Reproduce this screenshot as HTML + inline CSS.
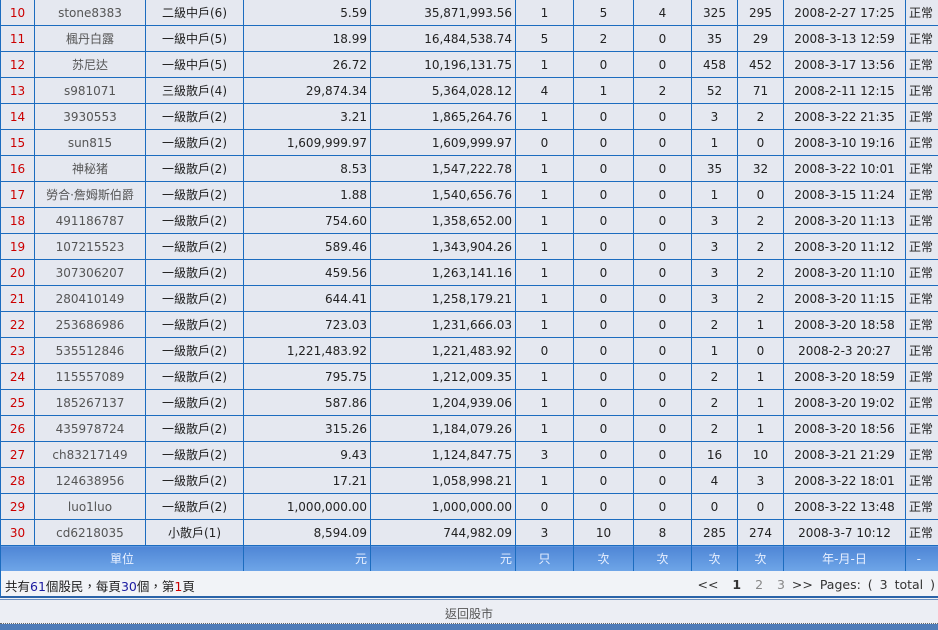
<!DOCTYPE html>
<html><head><meta charset="utf-8"><style>
*{margin:0;padding:0;box-sizing:border-box}
body{width:938px;height:630px;overflow:hidden;background:#eef0f5;font-family:"DejaVu Sans","Noto Sans CJK TC",sans-serif;font-size:12px;color:#222;position:relative}
table{position:absolute;left:0;top:-1px;border-collapse:collapse;table-layout:fixed;width:960px}
td{height:26px;border:1px solid #1c6cbf;background:#e5e8f0;text-align:center;white-space:nowrap;overflow:hidden;padding:0 3px}
td.r{text-align:right}
td.l{text-align:left;padding-left:3px}
td.n{color:#c00}
td.g{color:#555}
tr.h td{background:linear-gradient(#4f86d6,#6fa6e8);color:#e8f0ff;height:26px}
#info{position:absolute;left:0;top:571px;width:938px;height:26px;background:#f1f3f7;border-left:1px solid #1c6cbf;font-size:12.5px}
#info .a{position:absolute;left:4px;top:5px}
#info .b{position:absolute;right:3px;top:6px;color:#333;word-spacing:3px}
.bl{color:#1a1aa0}.rd{color:#c00}
#line{position:absolute;left:0;top:596px;width:938px;height:4px;border-top:2px solid #2a63a8;border-bottom:1px solid #6f92c0}
#back{position:absolute;left:0;top:600px;width:938px;height:24px;background:#eceef4;border-bottom:1px dotted #666;text-align:center;padding-top:5px;color:#555}
#bar{position:absolute;left:0;top:624px;width:938px;height:6px;background:#4f7cb8}
</style></head><body>
<table>
<colgroup><col style="width:34px"><col style="width:111px"><col style="width:98px"><col style="width:127px"><col style="width:145px"><col style="width:58px"><col style="width:60px"><col style="width:58px"><col style="width:46px"><col style="width:46px"><col style="width:122px"><col style="width:55px"></colgroup>
<tr><td class="n">10</td><td class="g">stone8383</td><td>二級中戶(6)</td><td class="r">5.59</td><td class="r">35,871,993.56</td><td>1</td><td>5</td><td>4</td><td>325</td><td>295</td><td>2008-2-27 17:25</td><td class="l">正常</td></tr>
<tr><td class="n">11</td><td class="g">楓丹白露</td><td>一級中戶(5)</td><td class="r">18.99</td><td class="r">16,484,538.74</td><td>5</td><td>2</td><td>0</td><td>35</td><td>29</td><td>2008-3-13 12:59</td><td class="l">正常</td></tr>
<tr><td class="n">12</td><td class="g">苏尼达</td><td>一級中戶(5)</td><td class="r">26.72</td><td class="r">10,196,131.75</td><td>1</td><td>0</td><td>0</td><td>458</td><td>452</td><td>2008-3-17 13:56</td><td class="l">正常</td></tr>
<tr><td class="n">13</td><td class="g">s981071</td><td>三級散戶(4)</td><td class="r">29,874.34</td><td class="r">5,364,028.12</td><td>4</td><td>1</td><td>2</td><td>52</td><td>71</td><td>2008-2-11 12:15</td><td class="l">正常</td></tr>
<tr><td class="n">14</td><td class="g">3930553</td><td>一級散戶(2)</td><td class="r">3.21</td><td class="r">1,865,264.76</td><td>1</td><td>0</td><td>0</td><td>3</td><td>2</td><td>2008-3-22 21:35</td><td class="l">正常</td></tr>
<tr><td class="n">15</td><td class="g">sun815</td><td>一級散戶(2)</td><td class="r">1,609,999.97</td><td class="r">1,609,999.97</td><td>0</td><td>0</td><td>0</td><td>1</td><td>0</td><td>2008-3-10 19:16</td><td class="l">正常</td></tr>
<tr><td class="n">16</td><td class="g">神秘猪</td><td>一級散戶(2)</td><td class="r">8.53</td><td class="r">1,547,222.78</td><td>1</td><td>0</td><td>0</td><td>35</td><td>32</td><td>2008-3-22 10:01</td><td class="l">正常</td></tr>
<tr><td class="n">17</td><td class="g">勞合·詹姆斯伯爵</td><td>一級散戶(2)</td><td class="r">1.88</td><td class="r">1,540,656.76</td><td>1</td><td>0</td><td>0</td><td>1</td><td>0</td><td>2008-3-15 11:24</td><td class="l">正常</td></tr>
<tr><td class="n">18</td><td class="g">491186787</td><td>一級散戶(2)</td><td class="r">754.60</td><td class="r">1,358,652.00</td><td>1</td><td>0</td><td>0</td><td>3</td><td>2</td><td>2008-3-20 11:13</td><td class="l">正常</td></tr>
<tr><td class="n">19</td><td class="g">107215523</td><td>一級散戶(2)</td><td class="r">589.46</td><td class="r">1,343,904.26</td><td>1</td><td>0</td><td>0</td><td>3</td><td>2</td><td>2008-3-20 11:12</td><td class="l">正常</td></tr>
<tr><td class="n">20</td><td class="g">307306207</td><td>一級散戶(2)</td><td class="r">459.56</td><td class="r">1,263,141.16</td><td>1</td><td>0</td><td>0</td><td>3</td><td>2</td><td>2008-3-20 11:10</td><td class="l">正常</td></tr>
<tr><td class="n">21</td><td class="g">280410149</td><td>一級散戶(2)</td><td class="r">644.41</td><td class="r">1,258,179.21</td><td>1</td><td>0</td><td>0</td><td>3</td><td>2</td><td>2008-3-20 11:15</td><td class="l">正常</td></tr>
<tr><td class="n">22</td><td class="g">253686986</td><td>一級散戶(2)</td><td class="r">723.03</td><td class="r">1,231,666.03</td><td>1</td><td>0</td><td>0</td><td>2</td><td>1</td><td>2008-3-20 18:58</td><td class="l">正常</td></tr>
<tr><td class="n">23</td><td class="g">535512846</td><td>一級散戶(2)</td><td class="r">1,221,483.92</td><td class="r">1,221,483.92</td><td>0</td><td>0</td><td>0</td><td>1</td><td>0</td><td>2008-2-3 20:27</td><td class="l">正常</td></tr>
<tr><td class="n">24</td><td class="g">115557089</td><td>一級散戶(2)</td><td class="r">795.75</td><td class="r">1,212,009.35</td><td>1</td><td>0</td><td>0</td><td>2</td><td>1</td><td>2008-3-20 18:59</td><td class="l">正常</td></tr>
<tr><td class="n">25</td><td class="g">185267137</td><td>一級散戶(2)</td><td class="r">587.86</td><td class="r">1,204,939.06</td><td>1</td><td>0</td><td>0</td><td>2</td><td>1</td><td>2008-3-20 19:02</td><td class="l">正常</td></tr>
<tr><td class="n">26</td><td class="g">435978724</td><td>一級散戶(2)</td><td class="r">315.26</td><td class="r">1,184,079.26</td><td>1</td><td>0</td><td>0</td><td>2</td><td>1</td><td>2008-3-20 18:56</td><td class="l">正常</td></tr>
<tr><td class="n">27</td><td class="g">ch83217149</td><td>一級散戶(2)</td><td class="r">9.43</td><td class="r">1,124,847.75</td><td>3</td><td>0</td><td>0</td><td>16</td><td>10</td><td>2008-3-21 21:29</td><td class="l">正常</td></tr>
<tr><td class="n">28</td><td class="g">124638956</td><td>一級散戶(2)</td><td class="r">17.21</td><td class="r">1,058,998.21</td><td>1</td><td>0</td><td>0</td><td>4</td><td>3</td><td>2008-3-22 18:01</td><td class="l">正常</td></tr>
<tr><td class="n">29</td><td class="g">luo1luo</td><td>一級散戶(2)</td><td class="r">1,000,000.00</td><td class="r">1,000,000.00</td><td>0</td><td>0</td><td>0</td><td>0</td><td>0</td><td>2008-3-22 13:48</td><td class="l">正常</td></tr>
<tr><td class="n">30</td><td class="g">cd6218035</td><td>小散戶(1)</td><td class="r">8,594.09</td><td class="r">744,982.09</td><td>3</td><td>10</td><td>8</td><td>285</td><td>274</td><td>2008-3-7 10:12</td><td class="l">正常</td></tr>
<tr class="h"><td colspan="3">單位</td><td class="r">元</td><td class="r">元</td><td>只</td><td>次</td><td>次</td><td>次</td><td>次</td><td>年-月-日</td><td class="l">&nbsp;&nbsp;-</td></tr>
</table>
<div id="info"><span class="a">共有<span class="bl">61</span>個股民，每頁<span class="bl">30</span>個，第<span class="rd">1</span>頁</span><span class="b">&lt;&lt; &nbsp;<b>1</b>&nbsp; <span style="color:#888">2</span> &nbsp;<span style="color:#888">3</span> &gt;&gt; Pages: ( 3 total )</span></div>
<div id="line"></div>
<div id="back">返回股市</div>
<div id="bar"></div>
</body></html>
